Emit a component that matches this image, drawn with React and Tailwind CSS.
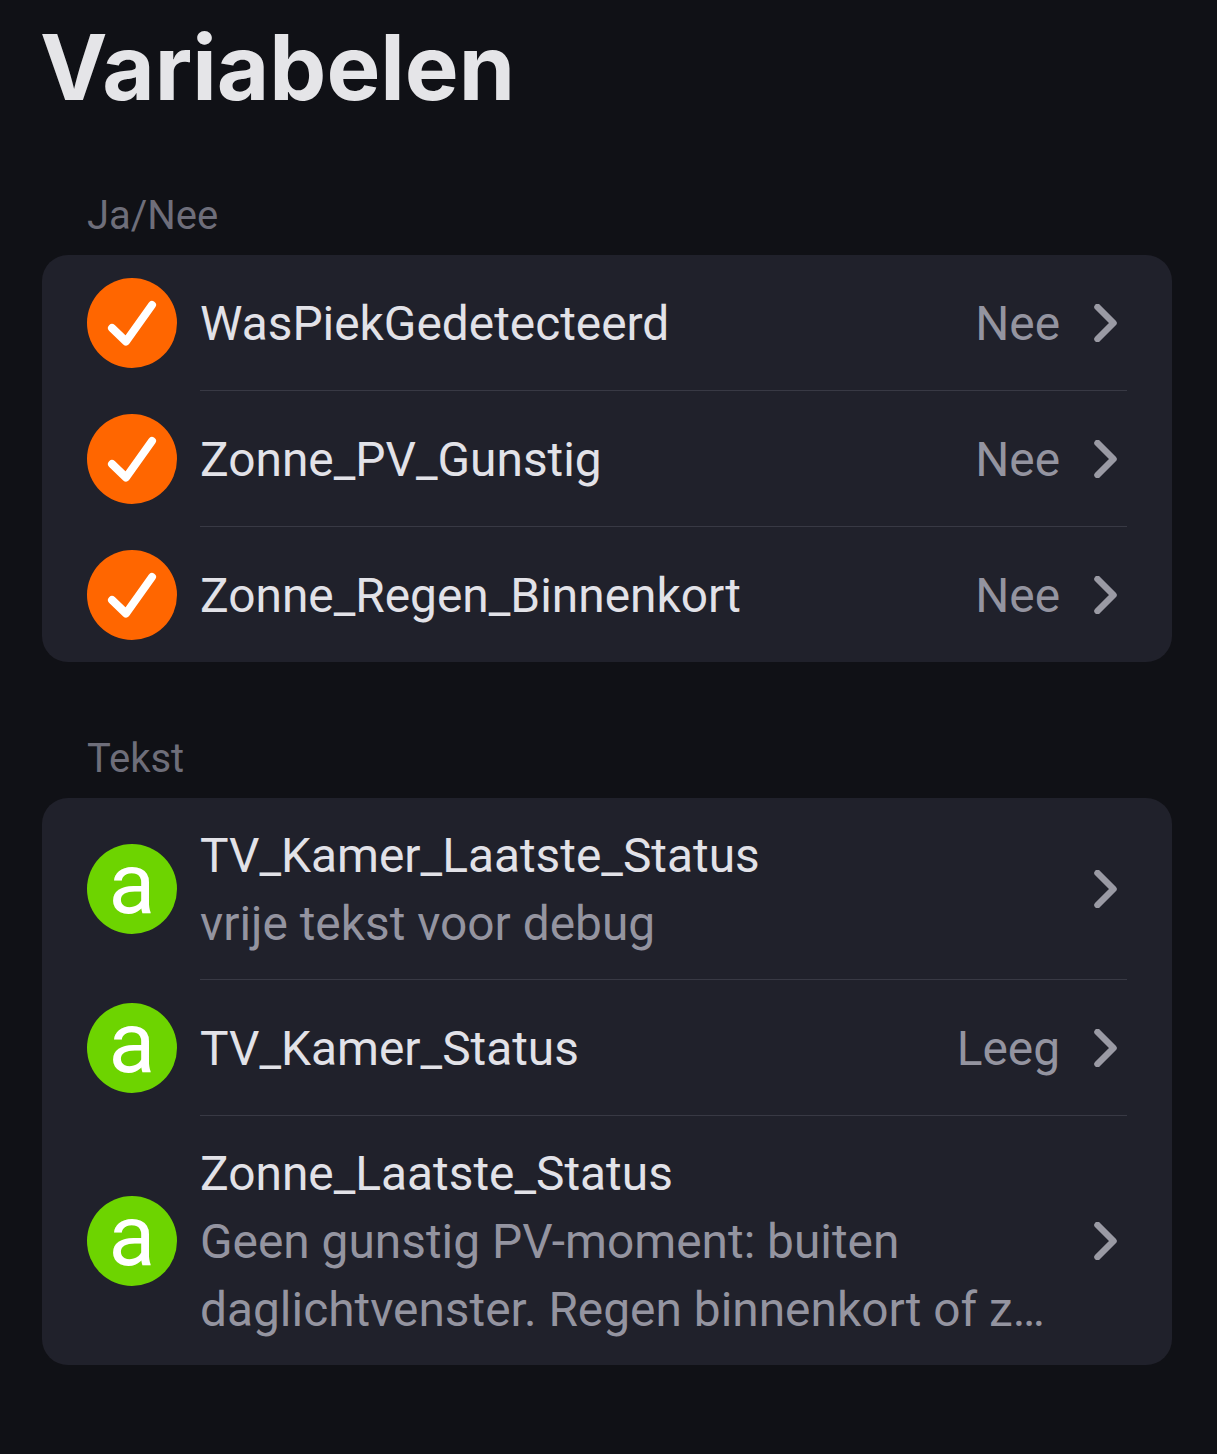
const Check = () => (
  <div className="w-[90px] h-[90px] rounded-full bg-[#ff6600] shrink-0 flex items-center justify-center">
    <svg width="90" height="90" viewBox="0 0 90 90" fill="none" stroke="white" strokeWidth="8" strokeLinecap="round" strokeLinejoin="round">
      <path d="M25 50 L39 63.5 L65 27" />
    </svg>
  </div>
);

const Letter = () => (
  <div className="w-[90px] h-[90px] rounded-full bg-[#6dd400] shrink-0 flex items-center justify-center">
    <span className="text-white text-[86px] leading-[70px] pb-[10px] font-['Roboto',sans-serif]">a</span>
  </div>
);

const Chevron = () => (
  <svg className="shrink-0" width="24" height="38" viewBox="0 0 24 38" fill="none" stroke="#9a9aa4" strokeWidth="6.5" strokeLinecap="round" strokeLinejoin="round">
    <path d="M3.5 3 L19.5 19 L3.5 35" />
  </svg>
);

const Row = ({ icon, title, sub, value, last }) => (
  <div className="flex items-center pl-[45px] pr-[45px]">
    {icon}
    <div className={`flex-1 min-w-0 ml-[23px] flex items-center py-[22.5px] ${last ? "min-h-[135px]" : "min-h-[136px] border-b border-[#383944]"}`}>
      <div className="flex-1 min-w-0 translate-y-[1px]">
        <div className="text-[#e2e2e8] text-[47.85px] leading-[68px]">{title}</div>
        {sub && <div className="text-[#9494a0] text-[47.85px] leading-[68px] max-w-[850px]">{sub}</div>}
      </div>
      {value && <div className="text-[#9494a0] text-[47.85px] leading-[68px] translate-y-[1px] mr-[34px]">{value}</div>}
      <div className="mr-[9px] flex items-center"><Chevron /></div>
    </div>
  </div>
);

const Section = ({ label, children }) => (
  <section>
    <div className="pl-[45px] pt-[1px] text-[#6e6e7a] text-[40px] leading-[46px]">{label}</div>
    <div className="mt-[16px] bg-[#20212b] rounded-[26px] overflow-hidden">{children}</div>
  </section>
);

export default function App() {
  return (
    <div className="min-h-[1454px] bg-[#101116] pl-[42px] pr-[45px] pt-[14px] font-['Roboto',sans-serif]">
      <h1 className="text-[#e5e5e8] text-[90.5px] leading-[108px] font-bold font-['Inter',sans-serif] -ml-[2px] -mt-[1px]">Variabelen</h1>
      <div className="mt-[71px] flex flex-col gap-[73px]">
        <Section label="Ja/Nee">
          <Row icon={<Check />} title="WasPiekGedetecteerd" value="Nee" />
          <Row icon={<Check />} title="Zonne_PV_Gunstig" value="Nee" />
          <Row icon={<Check />} title="Zonne_Regen_Binnenkort" value="Nee" last />
        </Section>
        <Section label="Tekst">
          <Row icon={<Letter />} title="TV_Kamer_Laatste_Status" sub="vrije tekst voor debug" />
          <Row icon={<Letter />} title="TV_Kamer_Status" value="Leeg" />
          <Row icon={<Letter />} title="Zonne_Laatste_Status" sub="Geen gunstig PV-moment: buiten daglichtvenster. Regen binnenkort of z…" last />
        </Section>
      </div>
    </div>
  );
}
